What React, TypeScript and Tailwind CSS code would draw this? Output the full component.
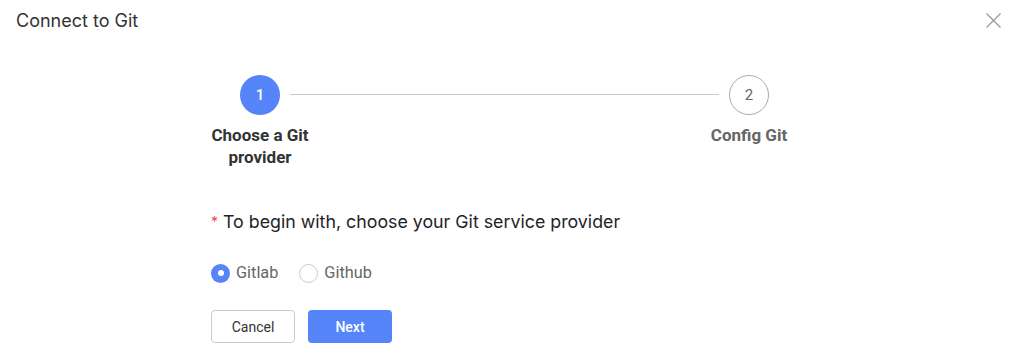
const App = () => {
  return (
    <div className="w-[1015px] h-[354px] bg-white relative font-['Inter',sans-serif]">
      <div className="flex items-start justify-between pl-4 pr-[14px] pt-[9px]">
        <h1 className="text-[18px] leading-6 text-[#333]">Connect to Git</h1>
        <svg width="15" height="15" viewBox="0 0 15 15" className="mt-1" fill="none" stroke="#999" strokeWidth="1.3">
          <path d="M0.5 0.5 L14.5 14.5 M14.5 0.5 L0.5 14.5" />
        </svg>
      </div>

      <div className="mt-[42px] ml-[200px] w-[609px] flex items-start">
        <div className="w-[120px] flex flex-col items-center shrink-0">
          <div className="w-10 h-10 rounded-full bg-[#5585f8] flex items-center justify-center text-white text-[15px] font-medium font-['Roboto',sans-serif]">
            1
          </div>
          <p className="mt-[9px] text-center text-[17px] leading-[22px] font-bold text-[#333] font-['Roboto',sans-serif] px-1">
            Choose a Git provider
          </p>
        </div>
        <div className="flex-1 h-px bg-[#c9c9d9] mt-[19px] -mx-[30px]" />
        <div className="w-[120px] flex flex-col items-center shrink-0">
          <div className="w-10 h-10 rounded-full border border-[#aaa] flex items-center justify-center text-[#666] text-[15px] font-['Roboto',sans-serif]">
            2
          </div>
          <p className="mt-[9px] text-center text-[17px] leading-[22px] font-bold text-[#666] font-['Roboto',sans-serif]">
            Config Git
          </p>
        </div>
      </div>

      <div className="pl-[211px] mt-[42px]">
        <p className="text-[17.8px] leading-6 text-[#1f2329] flex items-center">
          <span className="text-[#f53f3f] text-sm mr-[5px]">*</span>
          To begin with, choose your Git service provider
        </p>
        <div className="mt-[27px] flex items-center font-['Roboto',sans-serif] text-[16.3px] leading-6 text-[#666]">
          <label className="flex items-center gap-[6px]">
            <span className="w-[19px] h-[19px] rounded-full bg-[#5585f8] flex items-center justify-center">
              <span className="w-[6px] h-[6px] rounded-full bg-white" />
            </span>
            Gitlab
          </label>
          <label className="flex items-center gap-[6px] ml-[21px]">
            <span className="w-[19px] h-[19px] rounded-full border border-[#ccc]" />
            Github
          </label>
        </div>
        <div className="mt-[25px] flex gap-[13px]">
          <button className="w-[84px] h-[33px] rounded border border-[#ccc] bg-white text-sm text-[#333] font-['Roboto',sans-serif]">
            Cancel
          </button>
          <button className="w-[84px] h-[33px] rounded bg-[#5585f8] text-sm text-white font-medium font-['Roboto',sans-serif]">
            Next
          </button>
        </div>
      </div>
    </div>
  );
};

export default App;
